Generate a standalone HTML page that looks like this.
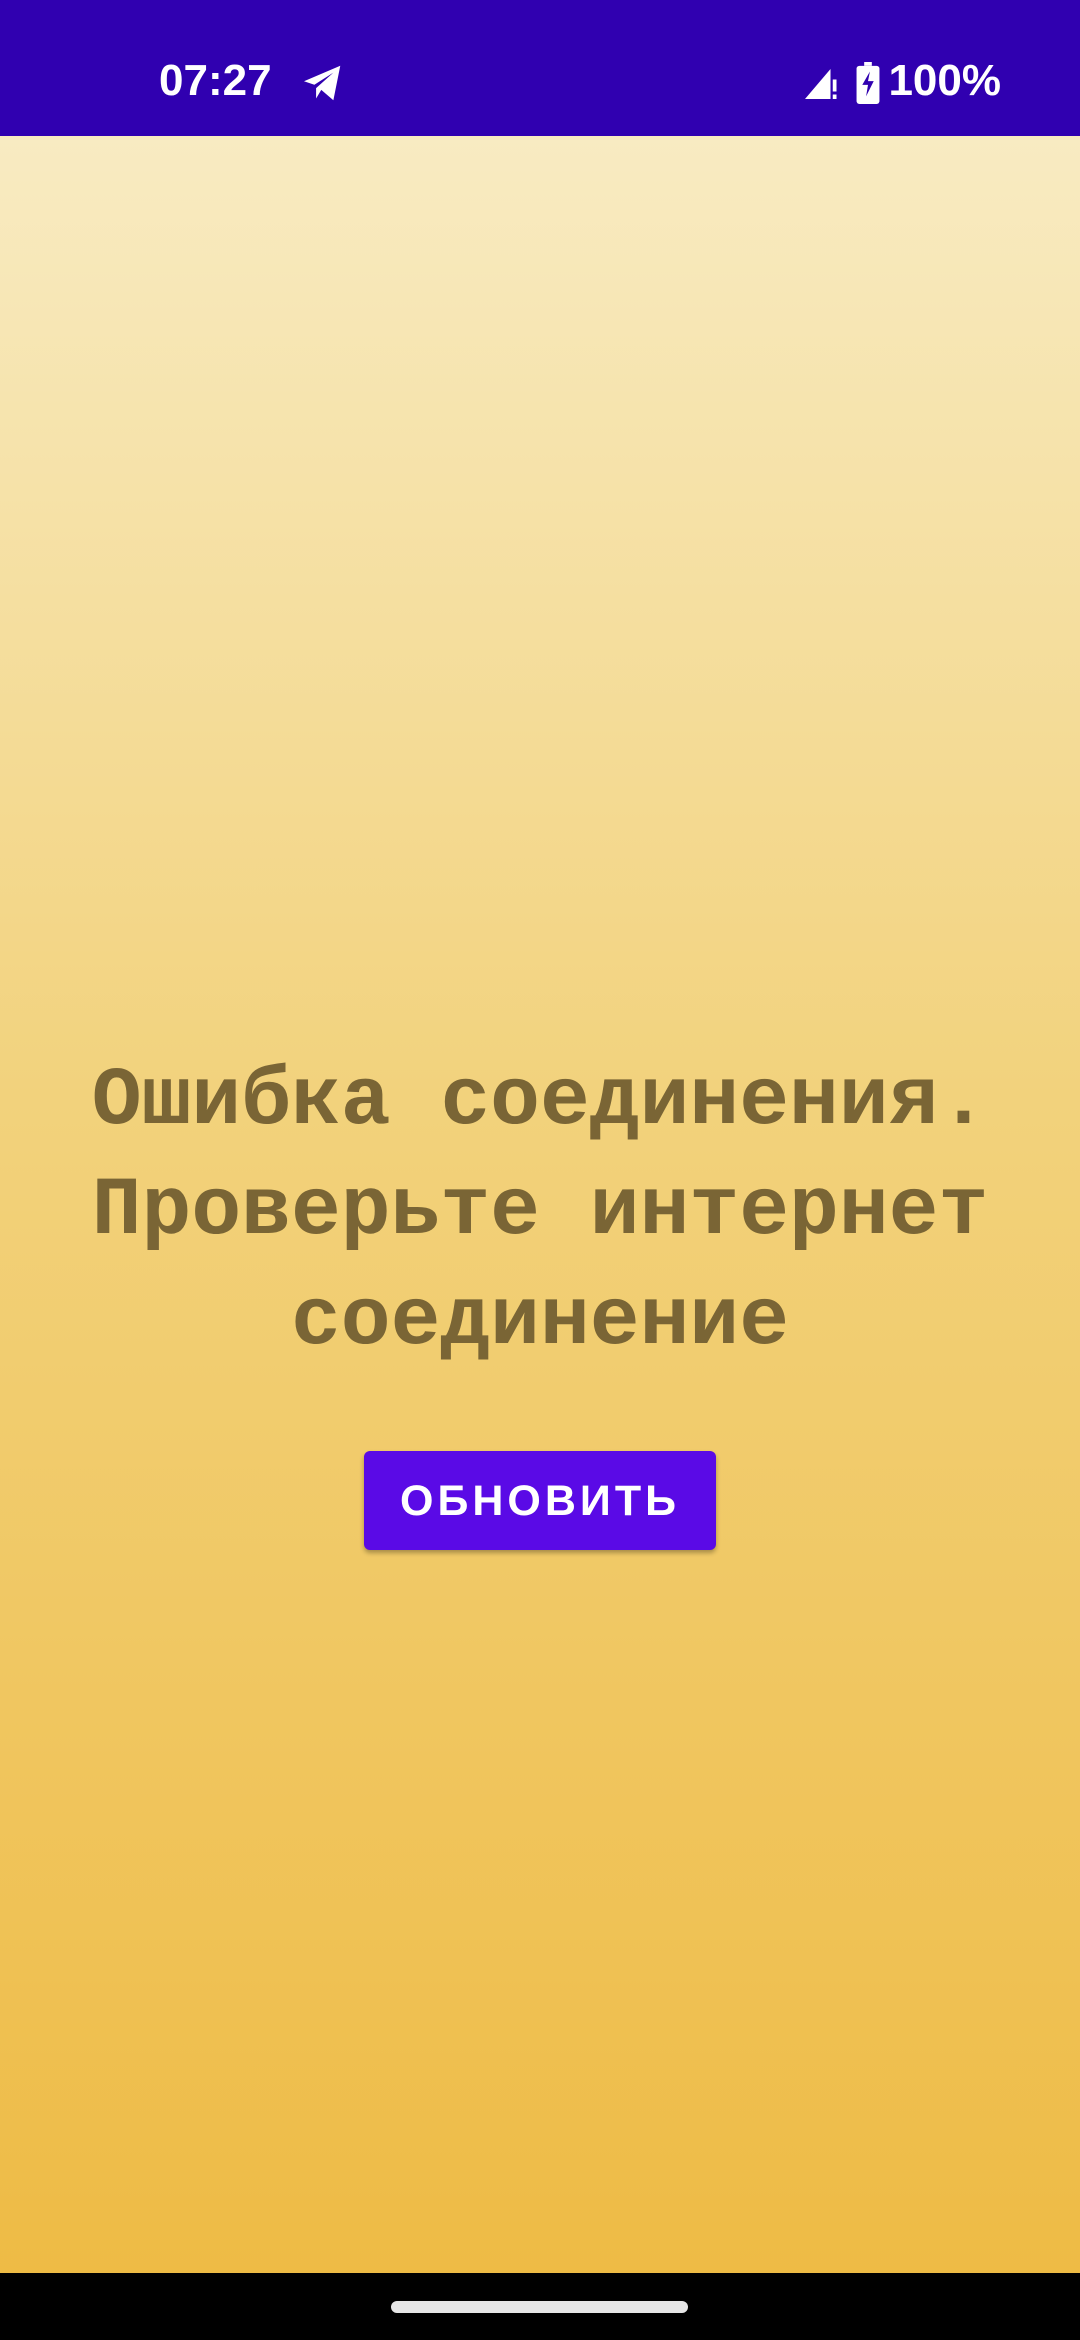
<!DOCTYPE html>
<html><head><meta charset="utf-8">
<style>
html,body{margin:0;padding:0;}
body{width:1080px;height:2340px;position:relative;overflow:hidden;font-family:"Liberation Sans",sans-serif;}
.status{position:absolute;top:0;left:0;width:1080px;height:136px;background:#3000b0;color:#fff;}
.main{position:absolute;top:136px;left:0;width:1080px;height:2137px;background:linear-gradient(#f8ebc2,#f2d27c 45%,#eebb45);}
.nav{position:absolute;top:2273px;left:0;width:1080px;height:67px;background:#000;}
.pill{position:absolute;left:391px;top:2301px;width:297px;height:12px;border-radius:6px;background:#e6e6e6;}
.msg{position:absolute;left:0;width:1080px;top:1046px;text-align:center;font-family:"Liberation Mono","DejaVu Sans Mono",monospace;font-weight:bold;font-size:83px;line-height:110px;color:#7a6535;}
.btn{position:absolute;left:364px;top:1451px;width:352px;height:99px;background:#5a0ae6;border-radius:6px;box-shadow:0 3px 5px rgba(0,0,0,0.3);color:#fff;font-size:43px;letter-spacing:4px;text-align:center;line-height:101px;font-weight:bold;}
</style></head><body>
<div class="status">
 <div style="position:absolute;left:159px;top:56px;font-size:44px;line-height:50px;font-weight:bold;">07:27</div>
 <svg style="position:absolute;left:302px;top:64px" width="42" height="38" viewBox="0 0 24 22"><path d="M1 10 L22 1 L18 21 L11 15 L8 20 L8 14 L18 5 L7 12 Z" fill="#fff"/></svg>
 <svg style="position:absolute;left:802px;top:66px" width="36" height="36" viewBox="0 0 24 24"><path d="M19 2 L19 22 L2 22 Z" fill="#fff"/><rect x="20.5" y="9" width="2.5" height="8" fill="#fff"/><rect x="20.5" y="19" width="2.5" height="3" fill="#fff"/></svg>
 <svg style="position:absolute;left:856px;top:62px" width="24" height="42" viewBox="0 0 12 22"><rect x="4" y="0" width="4" height="2" fill="#fff"/><rect x="0" y="2" width="12" height="20" rx="1.5" fill="#fff"/><path d="M7 5 L3 12 L6 12 L5 18 L9 10 L6 10 Z" fill="#3000b0"/></svg>
 <div style="position:absolute;right:79px;top:56px;font-size:44px;line-height:50px;font-weight:bold;">100%</div>
</div>
<div class="main"></div>
<div class="msg">Ошибка соединения.<br>Проверьте интернет<br>соединение</div>
<div class="btn">ОБНОВИТЬ</div>
<div class="nav"></div>
<div class="pill"></div>
</body></html>
